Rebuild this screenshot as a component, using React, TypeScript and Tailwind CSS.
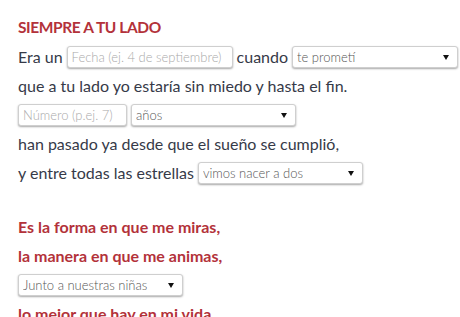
const field =
  "h-[22px] rounded-[3px] border border-[#cfcfcf] bg-white px-[4px] py-0 text-[13px] leading-[20px] font-light text-[#555] shadow-[0_1px_2px_rgba(0,0,0,0.35)] outline-none";

interface SelectProps {
  value: string;
  width: string;
  options: string[];
}

const Select = ({ value, width, options }: SelectProps) => {
  return (
    <span className={`relative flex ${width}`}>
      <select defaultValue={value} className={`${field} w-full appearance-none pr-5`}>
        {options.map((o) => (
          <option key={o}>{o}</option>
        ))}
      </select>
      <span className="pointer-events-none absolute right-[9px] top-[9px] size-0 border-x-[3px] border-t-[5px] border-x-transparent border-t-[#111]" />
    </span>
  );
};

const Line = ({ children }: { children: React.ReactNode }) => (
  <div className="flex h-[29px] items-center gap-[4px] whitespace-nowrap">{children}</div>
);

export default function App() {
  return (
    <div
      className="h-[317px] overflow-hidden bg-white pt-[13px] pl-[18px] text-[16px] text-[#363a48]"
      style={{ fontFamily: "Lato, 'Open Sans', sans-serif" }}
    >
      <h2 className="flex h-[29px] items-center text-[15.5px] font-bold tracking-[-0.4px] text-[#b3323a]">
        SIEMPRE A TU LADO
      </h2>

      <div>
        <Line>
          Era un
          <input className={`${field} w-[166px] placeholder:text-[#aaa]`} placeholder="Fecha (ej. 4 de septiembre)" />
          cuando
          <Select value="te prometí" width="w-[166px]" options={["te prometí", "me juraste"]} />
        </Line>
        <Line>que a tu lado yo estaría sin miedo y hasta el fin.</Line>
        <Line>
          <input className={`${field} w-[109px] placeholder:text-[#aaa]`} placeholder="Número (p.ej. 7)" />
          <Select value="años" width="w-[165px]" options={["años", "meses", "días"]} />
        </Line>
        <Line>han pasado ya desde que el sueño se cumplió,</Line>
        <Line>
          y entre todas las estrellas
          <Select value="vimos nacer a dos" width="w-[165px]" options={["vimos nacer a dos", "vimos nacer a una"]} />
        </Line>
      </div>

      <div className="mt-[25px] font-bold text-[#b3323a]">
        <Line>Es la forma en que me miras,</Line>
        <Line>la manera en que me animas,</Line>
        <Line>
          <Select value="Junto a nuestras niñas" width="w-[165px]" options={["Junto a nuestras niñas", "Junto a nuestros niños"]} />
        </Line>
        <Line>lo mejor que hay en mi vida.</Line>
      </div>
    </div>
  );
}
